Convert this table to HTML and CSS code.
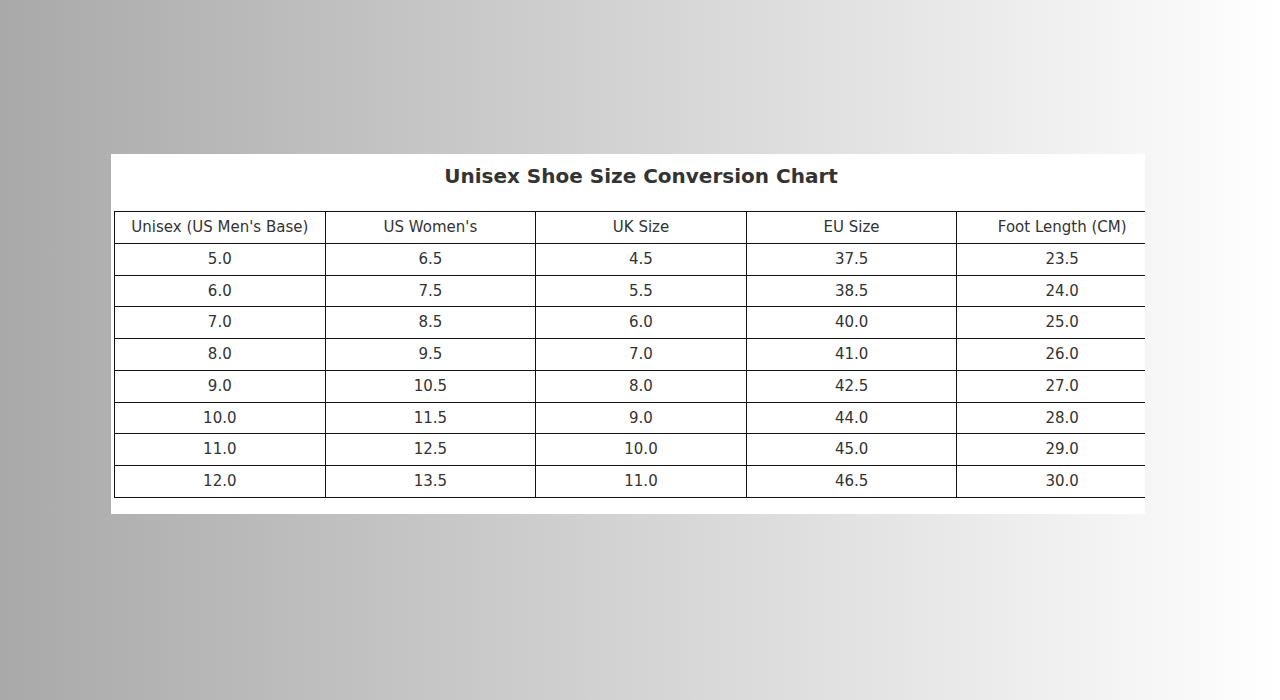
FILE: index.html
```html
<!DOCTYPE html>
<html>
<head>
<meta charset="utf-8">
<link rel="stylesheet" href="styles.css">
</head>
<body>
<div class="page">
  <div class="card">
    <div class="inner">
      <h2 class="title">Unisex Shoe Size Conversion Chart</h2>
      <table class="chart">
        <thead>
          <tr><th>Unisex (US Men's Base)</th><th>US Women's</th><th>UK Size</th><th>EU Size</th><th>Foot Length (CM)</th></tr>
        </thead>
        <tbody>
          <tr><td>5.0</td><td>6.5</td><td>4.5</td><td>37.5</td><td>23.5</td></tr>
          <tr><td>6.0</td><td>7.5</td><td>5.5</td><td>38.5</td><td>24.0</td></tr>
          <tr><td>7.0</td><td>8.5</td><td>6.0</td><td>40.0</td><td>25.0</td></tr>
          <tr><td>8.0</td><td>9.5</td><td>7.0</td><td>41.0</td><td>26.0</td></tr>
          <tr><td>9.0</td><td>10.5</td><td>8.0</td><td>42.5</td><td>27.0</td></tr>
          <tr><td>10.0</td><td>11.5</td><td>9.0</td><td>44.0</td><td>28.0</td></tr>
          <tr><td>11.0</td><td>12.5</td><td>10.0</td><td>45.0</td><td>29.0</td></tr>
          <tr><td>12.0</td><td>13.5</td><td>11.0</td><td>46.5</td><td>30.0</td></tr>
        </tbody>
      </table>
    </div>
  </div>
</div>
</body>
</html>
```
FILE: styles.css
```css
html, body {
  margin: 0;
  padding: 0;
}
body {
  font-family: "DejaVu Sans", sans-serif;
  color: #333;
}
.page {
  width: 1280px;
  height: 700px;
  background: linear-gradient(to right, #a9a9a9, #ffffff);
  padding-top: 154px;
  padding-left: 111px;
  box-sizing: border-box;
}
.card {
  width: 1034px;
  height: 360px;
  background: #fff;
  overflow: hidden;
  box-sizing: border-box;
  padding: 10px 0 0 3px;
}
.inner {
  width: 1054px;
}
.title {
  margin: 0 0 23px 0;
  font-size: 20px;
  line-height: 24px;
  font-weight: bold;
  text-align: center;
  color: #333;
}
.chart {
  width: 1054px;
  border-collapse: collapse;
  table-layout: fixed;
  font-size: 15px;
}
.chart th, .chart td {
  border: 1px solid #111;
  padding: 7px 4px;
  line-height: 16.78px;
  text-align: center;
  font-weight: normal;
  color: #333;
}
```
